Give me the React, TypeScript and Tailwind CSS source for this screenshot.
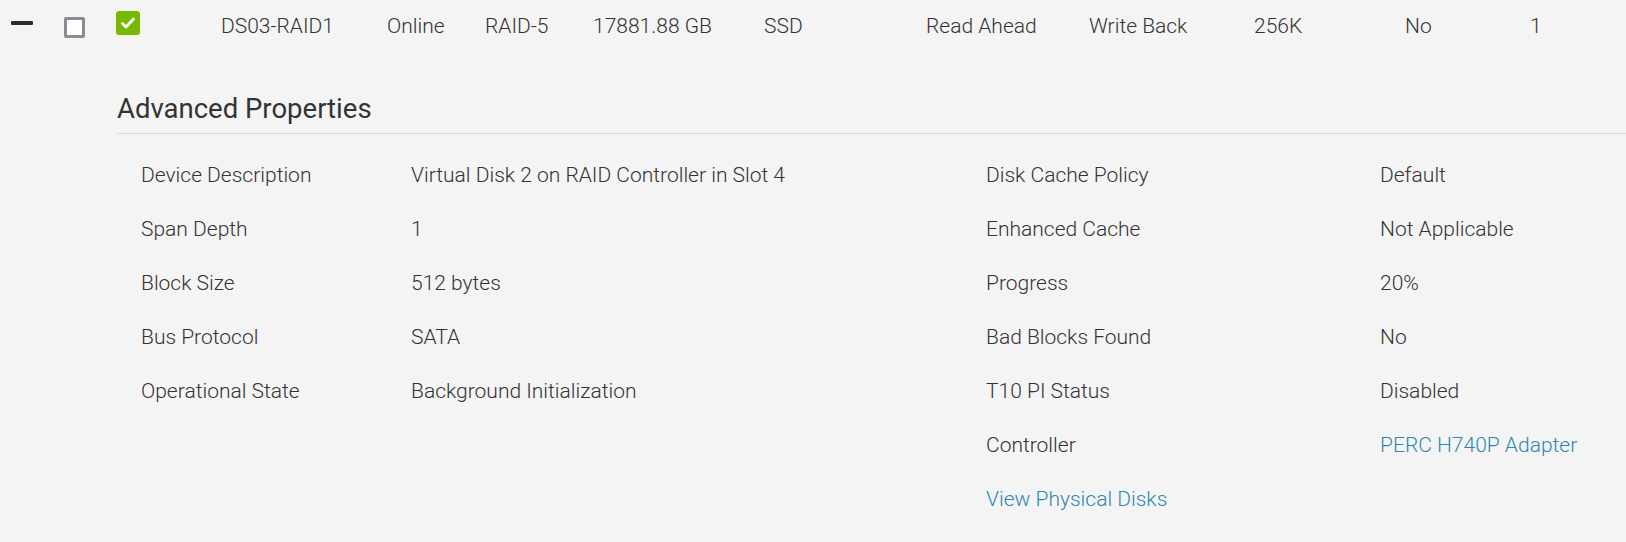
const headerCells = [
  { text: "DS03-RAID1", w: "w-[166px]" },
  { text: "Online", w: "w-[98px]" },
  { text: "RAID-5", w: "w-[108px]" },
  { text: "17881.88 GB", w: "w-[171px]" },
  { text: "SSD", w: "w-[162px]" },
  { text: "Read Ahead", w: "w-[163px]" },
  { text: "Write Back", w: "w-[165px]" },
  { text: "256K", w: "w-[151px]" },
  { text: "No", w: "w-[125px]" },
  { text: "1", w: "w-[60px]" },
];

type Prop = { label: string; value?: string; link?: boolean; labelLink?: boolean };

const leftProps: Prop[] = [
  { label: "Device Description", value: "Virtual Disk 2 on RAID Controller in Slot 4" },
  { label: "Span Depth", value: "1" },
  { label: "Block Size", value: "512 bytes" },
  { label: "Bus Protocol", value: "SATA" },
  { label: "Operational State", value: "Background Initialization" },
];

const rightProps: Prop[] = [
  { label: "Disk Cache Policy", value: "Default" },
  { label: "Enhanced Cache", value: "Not Applicable" },
  { label: "Progress", value: "20%" },
  { label: "Bad Blocks Found", value: "No" },
  { label: "T10 PI Status", value: "Disabled" },
  { label: "Controller", value: "PERC H740P Adapter", link: true },
  { label: "View Physical Disks", labelLink: true },
];

function PropRow({ prop, labelW }: { prop: Prop; labelW: string }) {
  return (
    <div className="flex h-[54px] items-start py-[15px]">
      <span className={`${labelW} shrink-0 ${prop.labelLink ? "text-[#2f87b0]" : "text-[#333333]"}`}>
        {prop.label}
      </span>
      {prop.value && (
        <span className={prop.link ? "text-[#2f87b0]" : "text-[#333333]"}>{prop.value}</span>
      )}
    </div>
  );
}

export default function App() {
  return (
    <div className="h-[542px] w-full overflow-hidden bg-[#f4f4f4] font-['Roboto',sans-serif] text-[21px] font-light leading-[24px] text-[#333333]">
      {/* expanded row header */}
      <div className="flex h-[60px] items-start">
        <div className="ml-[11px] mt-[21px] h-[4px] w-[22px] rounded-[1px] bg-[#2b2b2b]" />
        <div className="ml-[31px] mt-[17px] h-[21px] w-[21px] rounded-[2px] border-[3px] border-[#8b8b95] bg-white" />
        <div className="ml-[31px] mt-[11px] flex h-[24px] w-[24px] items-center justify-center rounded-[3px] bg-[#77b800]">
          <svg width="16" height="16" viewBox="0 0 16 16" fill="none">
            <path d="M2.5 8.5l3.5 3.5 7.5-8" stroke="white" strokeWidth="2.8" strokeLinecap="round" strokeLinejoin="round" />
          </svg>
        </div>
        <div className="ml-[81px] mt-[14px] flex">
          {headerCells.map((c) => (
            <span key={c.text} className={`${c.w} shrink-0`}>
              {c.text}
            </span>
          ))}
        </div>
      </div>

      {/* advanced properties */}
      <div className="pl-[117px] pt-[33px]">
        <h2 className="border-b border-[#dadada] pb-[8px] text-[27.5px] font-normal leading-[32px] text-[#333333]">
          Advanced Properties
        </h2>
        <div className="mt-[14px] flex pl-[24px]">
          <div className="w-[845px] shrink-0">
            {leftProps.map((p) => (
              <PropRow key={p.label} prop={p} labelW="w-[270px]" />
            ))}
          </div>
          <div className="flex-1">
            {rightProps.map((p) => (
              <PropRow key={p.label} prop={p} labelW="w-[394px]" />
            ))}
          </div>
        </div>
      </div>
    </div>
  );
}
